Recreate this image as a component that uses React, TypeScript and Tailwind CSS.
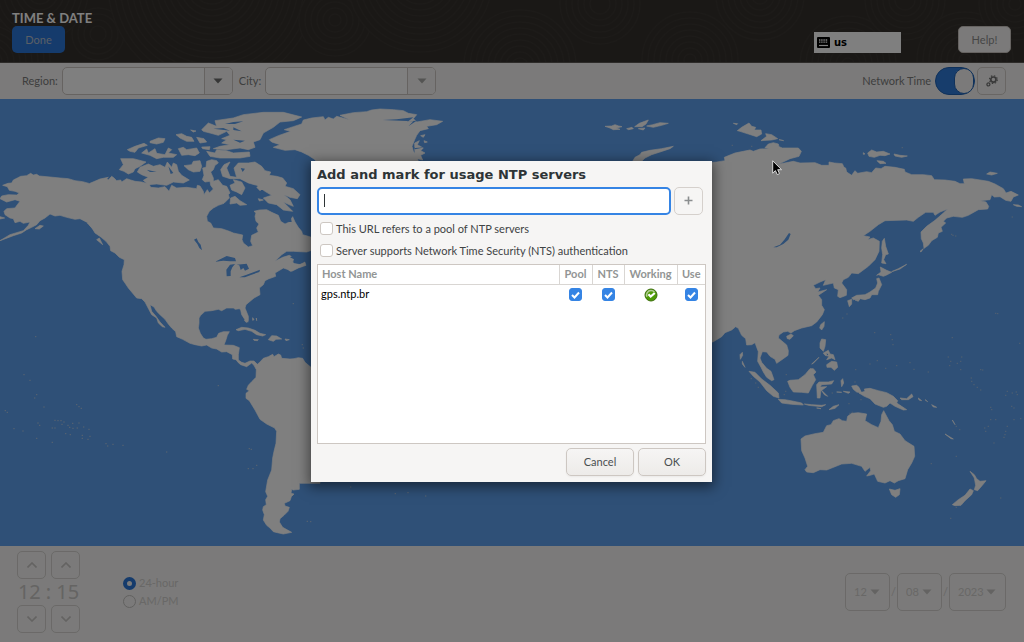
import { useState } from "react";
import type { ReactNode } from "react";

const LAND_WEST = [
  // North and South America
  "M8,262 L24,256 35,255 40,246 52,240 62,235 80,233 92,226 100,231 110,229 118,234 150,237 180,240 205,242 225,248 248,251 270,257 285,254 300,250 320,241 325,246 335,235 342,240 350,248 362,246 365,252 380,242 392,246 405,250 425,252 447,258 452,268 475,270 495,266 507,280 515,262 530,270 560,268 590,272 592,262 600,264 610,280 612,290 622,275 628,285 640,273 632,262 630,250 615,252 607,245 612,232 608,210 618,208 620,190 635,185 650,188 655,195 645,202 640,215 632,222 640,240 640,250 655,245 668,262 680,265 690,285 685,290 688,300 672,316 655,322 640,330 628,340 620,355 622,370 632,375 640,390 665,392 688,400 700,405 728,411 726,425 730,435 745,447 758,443 752,430 755,412 775,402 770,390 777,378 768,370 765,355 768,345 762,340 778,336 800,335 815,343 835,352 842,370 855,378 868,372 878,356 885,372 895,388 905,400 908,410 925,415 940,420 940,455 920,462 880,460 860,460 845,470 825,490 848,478 868,472 882,480 878,492 900,500 915,492 915,500 890,510 870,520 865,515 850,510 825,525 827,535 805,543 795,548 790,560 778,570 780,590 762,600 738,620 735,630 745,655 745,668 738,670 725,650 722,636 718,632 706,634 700,630 680,630 665,638 655,634 635,638 615,640 602,652 597,660 597,676 595,690 601,706 610,720 618,724 635,722 650,718 656,706 670,701 688,701 682,712 678,725 672,741 700,742 718,749 715,770 715,786 725,793 735,796 750,789 762,789 772,799 780,792 790,781 805,776 818,769 822,776 835,768 842,771 845,781 870,783 882,782 895,779 908,781 915,793 933,808 960,820 960,1156 898,1156 898,1174 880,1176 875,1174 873,1186 882,1188 874,1196 870,1208 853,1216 855,1224 868,1228 864,1240 852,1252 840,1262 838,1272 848,1288 875,1303 850,1308 832,1304 820,1301 810,1290 800,1282 790,1266 793,1250 788,1236 790,1226 799,1220 797,1205 803,1195 797,1181 803,1146 815,1116 818,1080 822,1060 828,1036 830,1000 824,990 800,978 780,964 765,936 748,908 738,901 738,886 748,878 740,874 745,862 755,851 768,838 769,815 762,802 755,795 740,806 722,800 715,794 708,785 698,783 697,770 680,761 665,762 650,753 635,750 620,741 605,744 585,740 570,736 548,724 530,716 527,701 515,690 505,678 495,664 480,650 470,640 462,627 450,620 455,640 468,655 480,672 495,688 487,686 475,675 470,660 455,650 447,635 435,612 425,602 410,600 395,582 385,570 375,555 368,545 366,520 372,500 373,485 358,478 345,465 332,458 330,445 318,430 300,415 285,405 275,388 265,375 240,362 225,364 200,358 180,352 165,354 150,348 135,360 120,368 110,380 95,388 80,395 65,405 40,413 0,428 30,410 70,398 85,382 90,372 70,376 60,370 45,374 40,362 30,360 15,350 12,340 20,332 45,330 52,320 60,310 45,305 20,312 0,302 5,294 25,290 50,291 58,285 45,280 28,277 22,266Z",
  // Canadian Arctic
  "M358,215 L370,200 362,182 400,182 438,192 420,205 405,212 400,222 385,228 372,220Z",
  "M412,222 L420,208 445,198 460,205 480,200 495,208 502,192 515,208 520,195 530,200 535,220 545,232 568,246 550,255 520,252 500,262 470,258 445,260 430,247 445,238 425,230Z",
  "M382,155 L405,145 432,136 442,142 415,150 405,163 390,160Z",
  "M425,165 L440,153 445,165 465,152 470,166 495,170 505,150 515,155 505,165 530,170 520,178 490,178 470,182 450,172Z",
  "M450,130 L475,120 495,122 490,133 470,138 450,134Z",
  "M528,110 L545,107 560,115 575,118 582,130 560,130 540,120Z M572,96 L588,99 580,102Z",
  "M535,152 L550,148 560,155 590,150 598,165 585,173 565,170 545,172Z",
  "M552,203 L575,200 580,190 600,188 605,205 600,220 580,222 565,215Z",
  "M590,118 L612,122 620,132 600,135Z M605,147 L630,146 628,155 608,152Z",
  "M605,95 L625,75 650,85 645,68 700,60 730,50 790,43 850,43 905,57 880,68 840,72 820,88 790,105 780,125 760,132 765,148 745,155 720,150 680,155 640,152 660,145 690,140 665,135 680,125 665,122 690,112 680,100 655,112 630,105 610,100Z",
  "M620,160 L645,165 650,155 680,158 700,165 748,162 750,175 720,180 660,180 630,175Z",
  "M662,215 L672,200 690,192 680,210 690,235 710,238 702,210 715,195 745,195 765,192 785,205 795,218 812,222 808,232 830,235 848,240 860,255 855,265 880,272 900,290 892,302 870,298 852,290 870,305 880,325 872,322 850,312 878,340 850,336 830,320 805,315 790,300 815,292 795,280 770,262 745,255 720,242 690,242 668,235Z",
  "M690,262 L705,255 700,245 725,252 735,270 725,290 710,282 695,276Z",
  "M690,318 L692,300 705,295 720,308 740,320 720,322 710,315Z",
  "M770,268 L782,262 790,270 780,278Z M775,302 L790,306 778,309Z",
  "M865,515 L885,504 915,495 918,502 895,510 875,520Z",
  "M105,392 L120,382 130,384 118,393Z M0,356 L14,360 0,363Z",
  "M335,455 L365,462 380,475 382,485 365,478 345,462Z",
  "M262,375 L275,372 290,395 310,412 300,415 280,395Z M290,425 L298,420 308,440Z",
  "M270,256 L300,243 325,238 310,250 285,258Z",
  // Caribbean
  "M708,695 L725,688 745,690 765,697 780,706 797,710 788,714 770,710 755,700 735,694 715,698Z",
  "M805,725 L815,713 830,714 845,723 828,724 820,730Z M760,724 L775,725 772,728 762,727Z M855,723 L868,725 858,728Z",
  "M758,659 L762,665 758,667Z M769,660 L770,668Z M733,666 L745,671 738,673Z",
  // Greenland
  "M808,125 L835,113 872,100 853,95 880,86 905,78 910,66 935,60 970,56 975,66 985,58 1000,63 1010,55 1050,66 1020,52 1060,44 1100,41 1115,36 1140,33 1180,35 1210,38 1225,46 1250,50 1240,62 1250,72 1290,65 1328,70 1310,80 1280,85 1285,92 1260,98 1250,112 1244,125 1236,145 1240,160 1250,175 1255,190 1100,300 1000,260 945,185 925,172 905,162 885,155 855,157 820,148 840,140 815,132Z",
  "M1244,135 L1258,128 1252,140 1270,150 1262,158 1275,165 1262,172 1268,186 1245,180Z M1262,113 L1275,110 1270,118Z M1272,128 L1282,132 1274,134Z",
  // European Arctic
  "M1898,190 L1905,178 1920,170 1925,163 1950,157 1985,152 2020,145 2010,152 1980,162 1955,170 1935,180 1925,190Z",
  "M1815,85 L1835,84 1845,80 1856,84 1866,86 1848,90 1860,94 1840,95 1830,90Z",
  "M1880,92 L1896,88 1900,92 1886,95Z M1904,86 L1918,76 1934,70 1945,66 1938,78 1926,86Z M1915,92 L1935,90 1930,96Z M1940,84 L1958,80 1980,74 2005,76 1985,82 1960,88Z",
].join(" ");

const LAND_EAST = [
  // Asia
  "M0,195 L35,192 60,188 58,178 90,165 115,160 135,156 145,160 165,153 195,152 180,149 190,138 205,134 220,138 222,146 232,150 280,150 289,160 282,175 255,182 220,199 265,190 285,195 330,194 350,202 372,202 372,192 388,195 412,197 417,208 422,210 425,222 440,232 450,218 458,226 485,221 500,224 512,210 528,212 540,205 570,208 598,214 600,222 620,230 655,230 680,233 688,245 720,246 750,250 765,257 778,257 775,243 800,242 850,250 870,258 895,272 903,285 918,280 940,291 925,297 918,310 902,307 885,296 868,297 860,290 855,305 825,308 843,312 851,325 848,333 820,335 790,352 772,358 745,355 725,360 715,370 722,375 708,388 712,400 700,405 697,418 680,428 670,442 657,451 655,435 649,422 648,402 665,385 690,367 715,345 728,333 705,342 690,352 685,343 662,343 640,358 625,370 605,366 540,368 520,380 495,400 475,413 495,417 488,425 505,420 523,430 522,460 510,485 490,505 460,527 440,525 430,538 415,545 410,555 425,575 424,592 405,599 398,595 400,575 388,570 385,555 355,562 362,545 345,552 325,562 332,572 345,570 338,582 365,575 340,592 350,605 350,622 358,635 352,650 335,672 320,683 290,690 268,698 258,705 248,700 235,702 222,711 220,720 245,741 250,758 249,772 235,782 215,796 210,784 195,775 185,762 172,761 165,780 170,793 185,811 198,820 207,845 200,848 185,838 175,822 168,808 158,790 160,761 150,734 140,740 125,741 122,722 110,712 100,691 92,686 80,696 60,704 50,716 25,731 0,740Z",
  // Arctic islands
  "M97,98 L110,88 132,75 140,85 152,88 148,96 168,96 170,108 155,116 130,108 105,100Z M168,128 L185,115 182,107 200,110 218,122 200,126Z M85,76 L98,77 95,80Z M222,125 L236,128Z",
  "M488,165 L500,156 515,162 535,160 555,168 540,173 525,172 508,178 492,175Z M567,168 L585,172 607,174 590,178 570,174Z M516,188 L535,190 543,196 525,197Z M845,228 L855,222 877,226 860,231Z M925,320 L940,321 950,326 935,325Z M475,164 L480,168 475,169Z",
  // Sakhalin, Japan, Taiwan
  "M532,430 L538,421 542,445 550,468 542,470 536,485 543,497 530,495 533,470 530,450Z",
  "M515,532 L528,522 526,507 545,517 560,523 545,531 535,535 520,530Z",
  "M515,542 L522,540 530,560 520,580 518,590 500,590 495,600 480,605 465,602 445,605 440,600 455,592 480,590 495,582 512,570 518,555Z M428,608 L440,604 440,618 433,626Z M450,606 L465,602 460,610Z",
  "M560,521 L580,512 605,499 585,513Z M645,460 L655,452 648,462Z",
  "M347,680 L358,671 357,685 350,696 344,690Z M245,715 L258,708 265,713 255,724 247,722Z",
  // Philippines and Indonesia
  "M345,735 L350,723 362,725 360,745 355,760 345,750Z M355,765 L370,757 375,768 385,770 390,785 380,780 365,785 372,775 360,772Z M365,800 L380,790 395,792 398,808 388,817 378,808 366,808Z M320,798 L342,778 325,796Z",
  "M132,820 L150,823 170,843 195,862 220,885 222,900 205,895 185,878 165,852 145,835Z",
  "M220,904 L240,905 262,909 290,915 295,921 260,919 230,915Z M298,918 L320,920 350,922 362,920 350,926 310,922Z M372,935 L385,925 402,920 390,931Z M335,930 L348,932Z",
  "M248,850 L255,847 280,845 300,830 315,812 325,812 333,822 325,830 332,845 322,862 310,885 290,883 265,882 255,868Z",
  "M335,860 L342,852 370,852 386,848 380,858 350,860 345,867 365,866 350,877 368,895 358,890 348,875 345,900 337,900Z",
  "M408,848 L413,842 416,855 410,866Z M395,882 L410,883Z M415,880 L435,882 430,886Z M440,864 L455,862 462,868 470,885 455,882 445,874Z",
  "M105,770 L112,763 113,772 106,784Z M112,790 L120,808 112,798Z",
  "M462,885 L480,880 478,873 495,871 520,878 545,884 565,895 578,908 575,915 590,925 605,935 595,936 570,925 555,915 545,925 535,928 510,918 495,902 478,895Z",
  "M585,900 L605,902 620,888 624,896 610,905 590,905Z M640,900 L650,908 642,906Z M660,905 L668,911Z M680,920 L695,928 685,927Z",
  // Australia and New Zealand
  "M288,1023 L300,1014 330,1007 355,1003 365,983 378,980 385,968 402,962 412,968 425,970 428,955 440,946 460,944 485,948 480,968 500,980 520,989 528,970 530,950 536,938 545,955 552,968 562,980 568,1000 585,1008 600,1028 627,1045 629,1075 620,1095 608,1115 600,1142 580,1148 568,1155 555,1148 540,1155 518,1150 508,1128 495,1132 485,1134 497,1118 495,1108 480,1120 470,1105 440,1096 410,1098 380,1110 365,1116 345,1115 325,1124 305,1122 300,1115 308,1105 300,1080 290,1058Z",
  "M553,1173 L570,1177 585,1172 583,1190 572,1198 560,1190Z",
  "M795,1120 L808,1130 815,1142 825,1150 843,1148 832,1162 818,1178 808,1175 812,1162 808,1140Z M742,1220 L760,1205 780,1192 795,1173 805,1178 800,1190 780,1208 768,1222 750,1223Z",
  "M720,1008 L745,1023 738,1022Z M742,966 L750,980Z",
].join(" ");

const WATER_WEST =
  "M582,425 L590,421 595,432 602,440 606,457 598,450 592,438Z M645,491 L668,480 680,474 705,480 708,490 690,490 670,488Z M680,535 L679,515 690,500 705,498 697,508 692,520 692,534Z M710,500 L740,497 747,512 735,518 730,510 722,516 718,502Z M718,538 L740,530 780,515 778,522 755,530 735,538Z M870,478 L882,472 905,470 902,480 912,490 895,497 880,495 885,485Z M1148,66 L1190,64 1240,58 1225,70 1250,68 1225,85 1240,70 1200,68Z M1238,145 L1245,150 1275,148 1245,154Z M640,92 L670,90 690,98 672,96Z M675,78 L700,72 730,70 705,78Z M700,88 L725,100 700,96Z M700,125 L735,128 720,134Z M440,215 L470,222 450,222Z M505,205 L520,225 512,228Z M722,210 L735,212 728,222Z M865,372 L872,355 875,372Z";
const WATER_EAST =
  "M205,448 L225,440 238,425 252,405 257,408 250,425 235,438 215,448Z M365,765 L370,770 366,772Z";

const ISLANDS_WEST = [
  [105, 716], [70, 830], [88, 847], [102, 900], [108, 890], [130, 927], [14, 938], [20, 943], [228, 920], [235, 926], [242, 931],
  [163, 967], [172, 968], [181, 968], [190, 972], [184, 979], [202, 982], [207, 988], [216, 976], [217, 991], [235, 975], [230, 990],
  [112, 975], [117, 982], [155, 990], [163, 990], [40, 992], [67, 999], [195, 1007], [209, 1010], [249, 987], [265, 994], [245, 1012],
  [268, 1015], [262, 1024], [245, 1021], [108, 1021], [155, 1033], [316, 1037], [321, 1044], [337, 1039], [367, 1042], [498, 1062],
  [746, 1052], [752, 1054], [743, 1112], [757, 1112], [768, 1102], [653, 863], [878, 617], [905, 740], [908, 750], [920, 1270], [930, 1271],
  [1050, 1167], [1184, 1187], [1222, 1184], [1275, 1194],
];
const ISLANDS_EAST = [
  [555, 710], [560, 725], [562, 740], [507, 704], [740, 719], [942, 736], [515, 788], [493, 798], [540, 811], [573, 803], [613, 794], [625, 814],
  [728, 777], [735, 790], [732, 803], [768, 777], [765, 790], [755, 796], [765, 815], [668, 822], [825, 815], [831, 816], [797, 840], [798, 850],
  [805, 860], [815, 868], [825, 876], [450, 815], [448, 852], [920, 885], [932, 882], [935, 890], [900, 892], [905, 880], [855, 928], [858, 935], [918, 925],
  [925, 930], [837, 990], [848, 985], [840, 1000], [905, 985], [900, 1000], [898, 1010], [895, 1018], [865, 1035], [752, 985], [762, 995], [677, 1097],
  [752, 1075], [885, 1200], [735, 1261], [752, 1228], [870, 646], [876, 647], [742, 412], [738, 409], [750, 414], [920, 357], [424, 648], [411, 660],
  [433, 946], [440, 943], [240, 880], [236, 890], [242, 830], [137, 842], [150, 855], [158, 868], [466, 905], [430, 917], [380, 885], [590, 149], [80, 142], [138, 145],
  [945, 962], [925, 965], [870, 965], [855, 965],
];
const dots = (points: number[][]) => points.map(([x, y]) => `M${x},${y}h4`).join(" ");

// x, y, outer radius
const RIPPLES = [
  [-10, 62, 60], [98, 34, 26], [40, -8, 48], [212, -16, 104], [335, 20, 36], [420, -20, 72], [520, 66, 56], [600, 4, 40], [690, 60, 48],
  [760, -4, 44], [848, 64, 48], [905, 0, 40], [965, 60, 48], [1015, 4, 36],
];

function WorldMap() {
  return (
    <svg
      className="block min-h-0 w-full flex-1 bg-[#5fa1ee]"
      viewBox="0 3 3072 1341"
      preserveAspectRatio="xMidYMid slice"
      role="img"
      aria-label="World map"
    >
      <g fill="#ffffff">
        <path d={LAND_WEST} stroke="#ffffff" strokeWidth="2" />
        <path d={dots(ISLANDS_WEST)} stroke="#b5c9e0" strokeWidth="3" />
        <path d={WATER_WEST} fill="#5fa1ee" />
      </g>
      <g fill="#ffffff" transform="translate(2115 0)">
        <path d={LAND_EAST} stroke="#ffffff" strokeWidth="2" />
        <path d={dots(ISLANDS_EAST)} stroke="#a5c0e0" strokeWidth="3" />
        <path d={WATER_EAST} fill="#5fa1ee" />
      </g>
    </svg>
  );
}

function Triangle({ className }: { className: string }) {
  return (
    <svg className={className} width="10" height="6" viewBox="0 0 10 6" aria-hidden="true">
      <path d="M0.5 0.5h9L5 5.5z" fill="currentColor" />
    </svg>
  );
}

function Combo({ label, muted }: { label: string; muted?: boolean }) {
  return (
    <div className="flex items-center gap-1">
      <label htmlFor={label} className="text-[#7c7c7c]">{label}:</label>
      <div className="flex h-7 rounded-[5px] border border-[#cdc7c2] bg-white">
        <input id={label} className="w-[141px] min-w-0 bg-transparent px-2 outline-none" />
        <button
          aria-label={`Show ${label} list`}
          className={`flex w-7 items-center justify-center rounded-r-[4px] border-l border-[#cdc7c2] bg-[#f6f5f4] ${muted ? "text-[#a8a8a6]" : "text-[#6c6c6c]"}`}
        >
          <Triangle className="block" />
        </button>
      </div>
    </div>
  );
}

function Stepper({ down, label }: { down?: boolean; label: string }) {
  return (
    <button aria-label={label} className="flex h-7 w-[29px] items-center justify-center rounded-[5px] border border-[#d6d3d0] text-[#c8c6c4]">
      <svg width="10" height="6" viewBox="0 0 10 6" fill="none" stroke="currentColor" strokeWidth="1.6" aria-hidden="true">
        <path d={down ? "M0.5 0.5L5 5L9.5 0.5" : "M0.5 5.5L5 1L9.5 5.5"} />
      </svg>
    </button>
  );
}

function DateSelect({ label, value, width }: { label: string; value: string; width: string }) {
  return (
    <div className={`grid h-[38px] items-center rounded-[5px] border border-[#d6d3d0] text-[#d2d0ce] ${width}`}>
      <select aria-label={label} className="h-full w-full appearance-none bg-transparent pl-2 outline-none [grid-area:1/1]">
        <option>{value}</option>
      </select>
      <Triangle className="pointer-events-none mr-[9px] justify-self-end text-[#c8c6c4] [grid-area:1/1]" />
    </div>
  );
}

function Check({ label, initial }: { label?: string; initial?: boolean }) {
  const [on, setOn] = useState(Boolean(initial));
  return (
    <span className="inline-grid place-items-center align-middle">
      <input
        type="checkbox"
        aria-label={label}
        checked={on}
        onChange={() => setOn(!on)}
        className="size-[13px] appearance-none rounded-[3px] border border-[#cdc7c2] bg-white [grid-area:1/1] checked:border-[#3584e4] checked:bg-[#3584e4]"
      />
      {on && (
        <svg className="pointer-events-none [grid-area:1/1]" width="9" height="8" viewBox="0 0 9 8" fill="none" stroke="#fff" strokeWidth="2" aria-hidden="true">
          <path d="M1 4L3.5 6.5L8 1.5" />
        </svg>
      )}
    </span>
  );
}

function CheckLine({ children }: { children: ReactNode }) {
  return (
    <label className="flex h-[22px] items-center gap-[3px] px-[3px]">
      <Check />
      {children}
    </label>
  );
}

function WorkingIcon() {
  return (
    <svg className="inline-block align-middle" width="14" height="14" viewBox="0 0 14 14" role="img" aria-label="Working">
      <circle cx="7" cy="7" r="6" fill="#4e9a06" stroke="#3b6e0b" />
      <path d="M2.9 8.8A4.5 4.5 0 0 1 7 2.5A4.5 4.5 0 0 1 10.4 4" fill="none" stroke="#b4cc98" strokeWidth="1.5" />
      <path d="M4.4 6.2L6.7 8.6L10.8 5" fill="none" stroke="#fff" strokeWidth="2.2" />
    </svg>
  );
}

function Cursor() {
  return (
    <svg className="pointer-events-none absolute top-[160px] left-[772px]" width="11" height="16" viewBox="0 0 11 16" aria-hidden="true">
      <path d="M0.7 0.8V13.2L3.4 10.6L5.3 14.6L7.5 13.6L5.7 9.7H9.6Z" fill="#000" stroke="#d8d8d8" strokeWidth="1" />
    </svg>
  );
}

function ServerDialog() {
  const dialogButton =
    "h-7 w-[68px] rounded-[5px] border border-[#cdc7c2] bg-linear-to-b from-[#f6f5f4] to-[#edebe9] text-[#4a4f50] shadow-xs";
  const th = "border-l border-[#d9d6d3] p-0 text-center font-bold";
  return (
    <div
      role="dialog"
      aria-modal="true"
      aria-labelledby="dialog-title"
      className="flex w-[401px] flex-col bg-[#f6f5f4] p-[6px] text-[#3e4344] shadow-[0_3px_12px_2px_rgba(0,0,0,0.5)]"
    >
      <h2 id="dialog-title" className="h-5 font-['DejaVu_Sans',sans-serif] text-[13px] leading-4 font-bold text-[#2e3436]">
        Add and mark for usage NTP servers
      </h2>
      <div className="flex gap-[3px] pr-[3px]">
        <div className="relative flex-1">
          <input
            aria-label="Server URL"
            className="block h-7 w-full rounded-[5px] border-2 border-[#3584e4] bg-white px-[6px] caret-transparent outline-none"
          />
          <span className="absolute top-[7px] left-[7px] h-[13px] w-px bg-[#2e3436]" />
        </div>
        <button aria-label="Add server" className="flex h-7 w-[29px] items-center justify-center rounded-[5px] border border-[#d5d0cc] text-[#8b8e8f]">
          <svg width="9" height="9" viewBox="0 0 9 9" stroke="currentColor" strokeWidth="1.6" aria-hidden="true">
            <path d="M4.5 0.5v8M0.5 4.5h8" />
          </svg>
        </button>
      </div>
      <div className="flex flex-col pt-[3px] pb-[2px]">
        <CheckLine>This URL refers to a pool of NTP servers</CheckLine>
        <CheckLine>Server supports Network Time Security (NTS) authentication</CheckLine>
      </div>
      <div className="h-[180px] border border-[#cdc7c2] bg-white">
        <table className="w-full table-fixed border-collapse">
          <colgroup>
            <col />
            <col className="w-[33px]" />
            <col className="w-8" />
            <col className="w-[53px]" />
            <col className="w-7" />
          </colgroup>
          <thead>
            <tr className="h-5 border-b border-[#d9d6d3] text-[#929595]">
              <th className="p-0 pl-1 text-left font-bold">Host Name</th>
              <th className={th}>Pool</th>
              <th className={th}>NTS</th>
              <th className={th}>Working</th>
              <th className={th}>Use</th>
            </tr>
          </thead>
          <tbody>
            <tr className="h-[18px] text-center">
              <td className="p-0 pl-[3px] text-left text-black">gps.ntp.br</td>
              <td className="p-0"><Check label="Pool" initial /></td>
              <td className="p-0"><Check label="NTS" initial /></td>
              <td className="p-0"><WorkingIcon /></td>
              <td className="p-0"><Check label="Use" initial /></td>
            </tr>
          </tbody>
        </table>
      </div>
      <div className="flex justify-end gap-1 pt-1">
        <button className={dialogButton}>Cancel</button>
        <button className={dialogButton}>OK</button>
      </div>
    </div>
  );
}

export default function App() {
  const radio =
    "size-[13px] appearance-none rounded-full border border-[#c4c2c0] checked:border-4 checked:border-[#2a76d8]";
  return (
    <div className="relative flex h-screen flex-col overflow-hidden bg-[#f6f5f4] font-[Lato,sans-serif] text-[11px] leading-4">
      <header className="relative flex h-[63px] items-end justify-between border-b border-[#5a5652] bg-[#35312d] px-3 pb-[9px]">
        <svg className="absolute inset-0 size-full" fill="#35312d" stroke="#3a3632" strokeWidth="1.5" aria-hidden="true">
          {RIPPLES.map(([x, y, outer]) =>
            Array.from({ length: Math.floor(outer / 6) }, (_, i) => outer - i * 6).map((r) => (
              <circle key={`${x}-${r}`} cx={x} cy={y} r={r} />
            )),
          )}
        </svg>
        <div className="relative">
          <h1 className="text-[13px] leading-4 font-bold text-white">TIME &amp; DATE</h1>
          <button className="block h-[27px] w-[53px] rounded-[5px] bg-[#2a76d8] text-[#b4bfcd]">Done</button>
        </div>
        <div className="relative flex items-end gap-[57px] pr-px">
          <button className="flex h-[21px] w-[87px] items-center gap-1 bg-white px-[3px] font-['DejaVu_Sans',sans-serif] text-[10px] font-bold text-black">
            <svg width="13" height="11" viewBox="0 0 13 11" aria-hidden="true">
              <rect width="13" height="11" rx="1" />
              <path d="M2 3h9M2 5.2h9" stroke="#fff" strokeWidth="1.3" strokeDasharray="1.4 0.8" />
              <path d="M2 8.5h9" stroke="#fff" strokeWidth="1.2" />
            </svg>
            us
          </button>
          <button className="h-[27px] w-[53px] rounded-[5px] border border-[#cdc7c2] bg-[#f6f5f4] text-[#8c8c8c]">Help!</button>
        </div>
      </header>

      <div className="flex h-9 shrink-0 items-center gap-[6px] pr-[18px] pl-[22px]">
        <Combo label="Region" />
        <Combo label="City" muted />
        <div className="ml-auto flex items-center gap-[2px]">
          <span id="network-time" className="mr-[2px] text-[#7c7c7c]">Network Time</span>
          <button role="switch" aria-checked="true" aria-labelledby="network-time" className="flex h-7 w-10 justify-end rounded-full border border-[#2063b5] bg-[#2f7ad9]">
            <span className="h-full w-5 rounded-full border border-[#2063b5] bg-[#f6f5f4]" />
          </button>
          <button aria-label="Configure NTP" className="flex h-7 w-[29px] items-center justify-center rounded-[5px] border border-[#d2cdc9] text-[#747474]">
            <svg width="12" height="12" viewBox="0 0 12 12" fill="none" stroke="currentColor" aria-hidden="true">
              <circle cx="7.4" cy="4.6" r="2.6" strokeWidth="1.7" />
              <circle cx="7.4" cy="4.6" r="3.9" strokeWidth="1.2" strokeDasharray="1.5 1.56" />
              <circle cx="2.4" cy="9.4" r="1.5" strokeWidth="1.3" />
            </svg>
          </button>
        </div>
      </div>

      <WorldMap />

      <footer className="flex h-24 shrink-0 items-center pr-[18px] pl-[17px] text-[#d2d0ce]">
        <div className="grid grid-cols-[29px_29px] gap-x-[5px] pb-[4px]">
          <Stepper label="Hour up" />
          <Stepper label="Minute up" />
          <div className="col-span-2 flex h-[26px] items-center justify-center gap-[5px] font-['Noto_Sans',sans-serif] text-xl text-[#cac8c6]">
            <span>12</span>
            <span>:</span>
            <span>15</span>
          </div>
          <Stepper label="Hour down" down />
          <Stepper label="Minute down" down />
        </div>
        <fieldset className="ml-[43px] flex flex-col gap-[2px] pb-[4px]">
          <label className="flex items-center gap-[3px]">
            <input type="radio" name="format" defaultChecked className={radio} />
            24-hour
          </label>
          <label className="flex items-center gap-[3px]">
            <input type="radio" name="format" className={radio} />
            AM/PM
          </label>
        </fieldset>
        <div className="ml-auto flex items-center gap-px pb-[4px]">
          <DateSelect label="Month" value="12" width="w-[45px]" />
          <span>/</span>
          <DateSelect label="Day" value="08" width="w-[45px]" />
          <span>/</span>
          <DateSelect label="Year" value="2023" width="w-[57px]" />
        </div>
      </footer>

      <div className="absolute inset-0 flex items-center justify-center bg-black/50 pr-px">
        <ServerDialog />
      </div>
      <Cursor />
    </div>
  );
}
